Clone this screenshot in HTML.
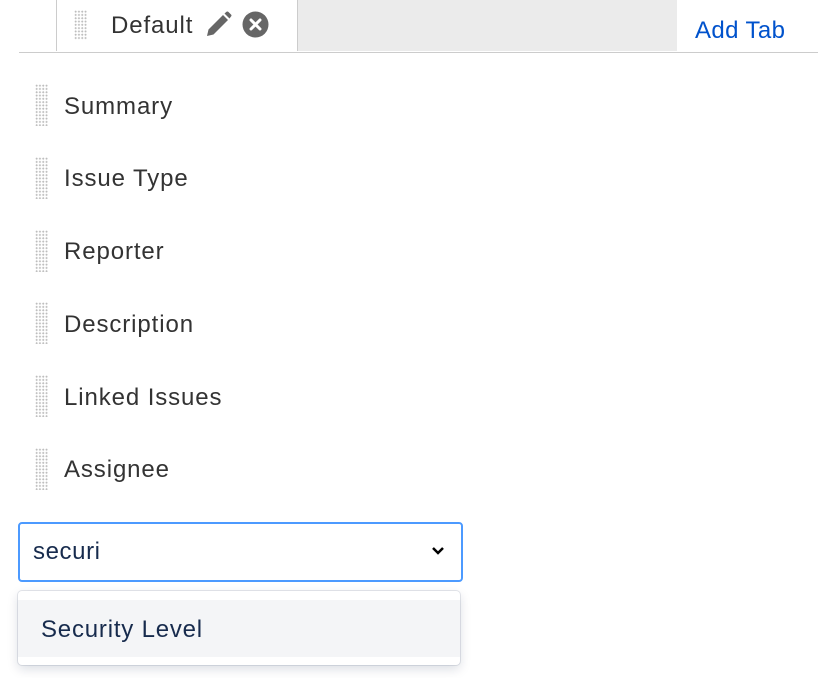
<!DOCTYPE html>
<html><head><style>
body{margin:0;width:818px;height:678px;background:#fff;font-family:"Liberation Sans",sans-serif;position:relative;overflow:hidden}
.a{position:absolute}
.grip{position:absolute;width:13px;background-image:radial-gradient(circle,#bdbdbd 0.9px,transparent 1.1px);background-size:3.3px 3.3px}
.item{position:absolute;left:64px;font-size:24px;color:#333;line-height:28px;letter-spacing:0.9px}
</style></head><body>
<div class="a" style="left:56px;top:0;width:240px;height:51px;border-left:1px solid #ccc;border-right:1px solid #ccc;background:#fff"></div>
<div class="a" style="left:298px;top:0;width:379px;height:51px;background:#ebebeb"></div>
<div class="a" style="left:19px;top:52px;width:799px;height:1px;background:#ccc"></div>
<div class="grip" style="left:74px;top:10px;height:30px"></div>
<div class="item" style="left:111px;top:12px">Default</div>
<svg class="a" style="left:204px;top:10px" width="28" height="28" viewBox="0 0 28 28"><path d="M3 26 L4.5 19.5 L19 5 L24 10 L9.5 24.5 Z" fill="#666"/><path d="M20.5 3.5 L22.5 1.8 Q23.5 1 24.5 2 L27 4.5 Q28 5.5 27 6.5 L25.5 8.5 Z" fill="#666"/></svg>
<svg class="a" style="left:242px;top:11px" width="27" height="27" viewBox="0 0 27 27"><circle cx="13.5" cy="13.5" r="13" fill="#666"/><path d="M9 9 L18 18 M18 9 L9 18" stroke="#fff" stroke-width="3" stroke-linecap="round"/></svg>
<div class="a" style="left:695px;top:17px;font-size:24px;color:#0052cc;letter-spacing:0.4px">Add Tab</div>
<div class="grip" style="left:35px;top:84px;height:42px"></div><div class="item" style="top:93px">Summary</div>
<div class="grip" style="left:35px;top:157px;height:42px"></div><div class="item" style="top:165px">Issue Type</div>
<div class="grip" style="left:35px;top:230px;height:42px"></div><div class="item" style="top:238px">Reporter</div>
<div class="grip" style="left:35px;top:302px;height:42px"></div><div class="item" style="top:311px">Description</div>
<div class="grip" style="left:35px;top:375px;height:42px"></div><div class="item" style="top:384px">Linked Issues</div>
<div class="grip" style="left:35px;top:448px;height:42px"></div><div class="item" style="top:456px">Assignee</div>
<div class="a" style="left:18px;top:522px;width:441px;height:56px;border:2px solid #4c9aff;border-radius:4px"></div>
<div class="a" style="left:33px;top:538px;font-size:24px;color:#172b4d;letter-spacing:0.6px">securi</div>
<svg class="a" style="left:430px;top:544px" width="16" height="14" viewBox="0 0 16 14"><path d="M3 4 L8 9 L13 4" stroke="#000" stroke-width="2.5" fill="none"/></svg>
<div class="a" style="left:18px;top:591px;width:442px;height:74px;border-radius:4px;background:#fff;box-shadow:0 0 0 1px rgba(9,30,66,.1),0 4px 11px rgba(9,30,66,.15)"></div>
<div class="a" style="left:18px;top:600px;width:442px;height:57px;background:#f4f5f7"></div>
<div class="a" style="left:41px;top:616px;font-size:24px;color:#172b4d;letter-spacing:0.8px">Security Level</div>
</body></html>
